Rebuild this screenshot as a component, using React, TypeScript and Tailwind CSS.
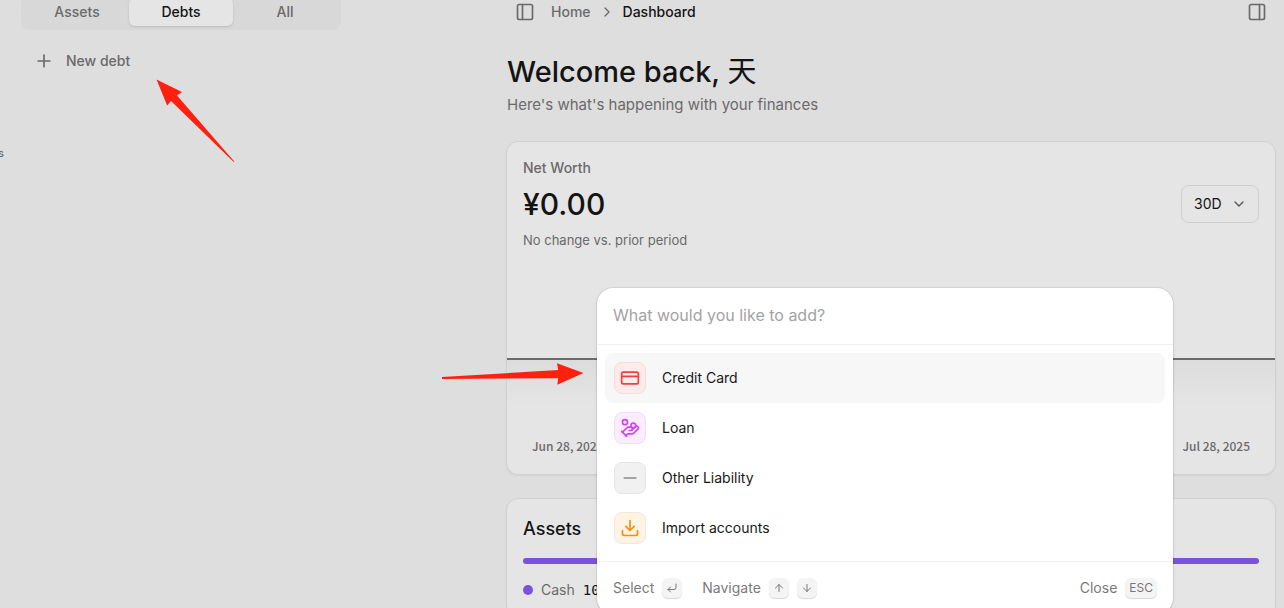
import React from 'react';
import {
  ArrowDown,
  ArrowUp,
  ChevronDown,
  ChevronRight,
  CornerDownLeft,
  CreditCard,
  Download,
  HandCoins,
  Minus,
  PanelLeft,
  PanelRight,
  Plus,
  type LucideIcon
} from 'lucide-react';

interface Action {
  id: string;
  label: string;
  icon: LucideIcon;
  tile: string;
}

const tabs = ['Assets', 'Debts', 'All'];

const actions: Action[] = [
  { id: 'credit-card', label: 'Credit Card', icon: CreditCard, tile: 'bg-[#fdeaea] border-[#f6dcdc] text-[#f23e3e]' },
  { id: 'loan', label: 'Loan', icon: HandCoins, tile: 'bg-[#fbecfe] border-[#f0dff4] text-[#d444f1]' },
  { id: 'other', label: 'Other Liability', icon: Minus, tile: 'bg-[#f1f1f1] border-[#e5e5e5] text-[#8a8a8a]' },
  { id: 'import', label: 'Import accounts', icon: Download, tile: 'bg-[#fef3e4] border-[#f5e8d6] text-[#f79009]' }
];

const Key: React.FC<{ children: React.ReactNode }> = ({ children }) => (
  <kbd className="flex h-5 min-w-5 items-center justify-center rounded-md bg-[#f4f4f4] px-1 font-[inherit] text-xs text-[#777] shadow-[0_1px_1px_rgba(0,0,0,0.16)]">
    {children}
  </kbd>
);

const Sidebar: React.FC = () => (
  <aside className="w-80 shrink-0 text-sm font-medium text-[#6a6a6a]">
    <div role="tablist" className="-mt-1.5 flex h-9 rounded-lg bg-[#d8d8d8] p-1">
      {tabs.map(tab => (
        <button
          key={tab}
          role="tab"
          aria-selected={tab === 'Debts'}
          className="flex-1 rounded-md py-1.5 leading-4 aria-selected:bg-[#e5e5e5] aria-selected:text-[#141414] aria-selected:shadow-sm"
        >
          {tab}
        </button>
      ))}
    </div>
    <button className="mt-[13px] flex h-9 w-full items-center gap-3 px-[13px]">
      <Plus size={20} strokeWidth={2} />
      New debt
    </button>
  </aside>
);

const NetWorthCard: React.FC = () => (
  <section className="mt-6 rounded-xl border border-[#d0d0d0] bg-[#e5e5e5] pb-5 shadow-xs">
    <div className="flex items-center justify-between px-4 pt-4">
      <div className="text-sm text-[#6a6a6a]">
        <h2 className="font-medium">Net Worth</h2>
        <p className="my-1.5 text-3xl leading-10 font-medium text-[#141414]">¥0.00</p>
        <p className="text-[13px] leading-5">No change vs. prior period</p>
      </div>
      <div className="relative">
        <select
          aria-label="Period"
          className="h-[38px] w-[78px] appearance-none rounded-lg border border-[#cecece] bg-transparent pl-3 text-sm text-[#141414]"
        >
          <option>30D</option>
        </select>
        <ChevronDown size={16} className="pointer-events-none absolute top-[11px] right-3 text-[#555]" />
      </div>
    </div>
    <div className="mt-[108px] h-20 border-t-2 border-[#6b6b6b] bg-linear-to-b from-[#dcdcdc] to-[#e5e5e5] to-60%" />
    <div className="flex justify-between px-[25px] font-['Noto_Sans_CJK_SC',sans-serif] text-xs font-medium text-[#6a6a6a]">
      <span>Jun 28, 2025</span>
      <span>Jul 28, 2025</span>
    </div>
  </section>
);

const AssetsCard: React.FC = () => (
  <section className="mt-[23px] rounded-xl border border-[#d0d0d0] bg-[#e5e5e5] p-4 shadow-xs">
    <h2 className="text-lg leading-[27px] font-medium text-[#141414]">Assets</h2>
    <div className="mt-4 h-1.5 rounded-full bg-[#7a52dd]" />
    <div className="mt-4 flex items-center gap-2 text-sm text-[#6a6a6a]">
      <span className="size-2.5 rounded-full bg-[#7a52dd]" />
      <span>Cash</span>
      <span className="font-['DejaVu_Sans_Mono',monospace] text-[#141414]">100%</span>
    </div>
  </section>
);

const AddAccountDialog: React.FC = () => (
  <div className="absolute inset-0 flex items-start justify-end pt-72 pr-[111px]">
    <div
      role="dialog"
      aria-label="Add account"
      className="w-full max-w-xl rounded-2xl bg-white shadow-[0_0_0_1px_rgba(0,0,0,0.06),0_1px_3px_rgba(0,0,0,0.12)]"
    >
      <input
        type="text"
        aria-label="Account type"
        placeholder="What would you like to add?"
        className="block h-14 w-full bg-transparent px-4 pb-0.5 text-base outline-none placeholder:text-[#a3a3a3]"
      />
      <ul className="border-y border-[#f1f1f1] p-2">
        {actions.map(({ id, label, icon: Icon, tile }, index) => (
          <li key={id}>
            <button
              className={`flex h-[50px] w-full items-center gap-4 rounded-lg px-[9px] text-sm text-[#171717] ${
                index === 0 ? 'bg-[#f7f7f7]' : ''
              }`}
            >
              <span className={`flex size-8 items-center justify-center rounded-lg border ${tile}`}>
                <Icon size={20} />
              </span>
              {label}
            </button>
          </li>
        ))}
      </ul>
      <div className="flex h-13 items-center gap-5 px-4 text-sm text-[#7a7a7a]">
        <span className="flex items-center gap-2">
          Select
          <Key><CornerDownLeft size={12} /></Key>
        </span>
        <span className="flex items-center gap-2">
          Navigate
          <Key><ArrowUp size={12} /></Key>
          <Key><ArrowDown size={12} /></Key>
        </span>
        <span className="ml-auto flex items-center gap-2">
          Close
          <Key>ESC</Key>
        </span>
      </div>
    </div>
  </div>
);

const Pointers: React.FC = () => (
  <svg
    className="pointer-events-none absolute top-0 left-0"
    width="600"
    height="400"
    fill="#ff2010"
    aria-hidden="true"
  >
    <path d="M156.5 79.5 182 92l-5 3.5 57.3 66-.6.6L171 101l-3.8 4.5Z" />
    <path d="M583.5 373 557 363.3l1.2 6.7L442 377v2l116.2-.8-.9 6.5Z" />
  </svg>
);

export default function App() {
  return (
    <div className="relative flex h-screen overflow-hidden bg-[#dedede] font-['Inter','Noto_Sans_CJK_SC',sans-serif]">
      <nav className="w-[21px] shrink-0 pt-[145px]">
        <a href="#accounts" className="flex w-1 justify-end text-[11px] leading-4 font-medium text-[#6a6a6a]">
          s
        </a>
      </nav>
      <Sidebar />
      <main className="ml-[165px] min-w-0 flex-1 pr-2">
        <header className="-mt-1.5 flex h-9 items-center justify-between px-[9px] text-[#6a6a6a]">
          <div className="flex items-center gap-4 text-sm font-medium">
            <button aria-label="Toggle left panel">
              <PanelLeft size={20} />
            </button>
            <div className="flex items-center gap-2">
              <a href="#home">Home</a>
              <ChevronRight size={16} />
              <span className="text-[#141414]">Dashboard</span>
            </div>
          </div>
          <button aria-label="Toggle right panel">
            <PanelRight size={20} />
          </button>
        </header>
        <div className="mt-6 px-px">
          <h1 className="text-[29px] leading-9 font-medium text-[#141414]">
            Welcome back, <span className="font-normal">天</span>
          </h1>
          <p className="mt-[3px] text-[15px] leading-6 text-[#6a6a6a]">Here's what's happening with your finances</p>
        </div>
        <NetWorthCard />
        <AssetsCard />
      </main>
      <AddAccountDialog />
      <Pointers />
    </div>
  );
}
